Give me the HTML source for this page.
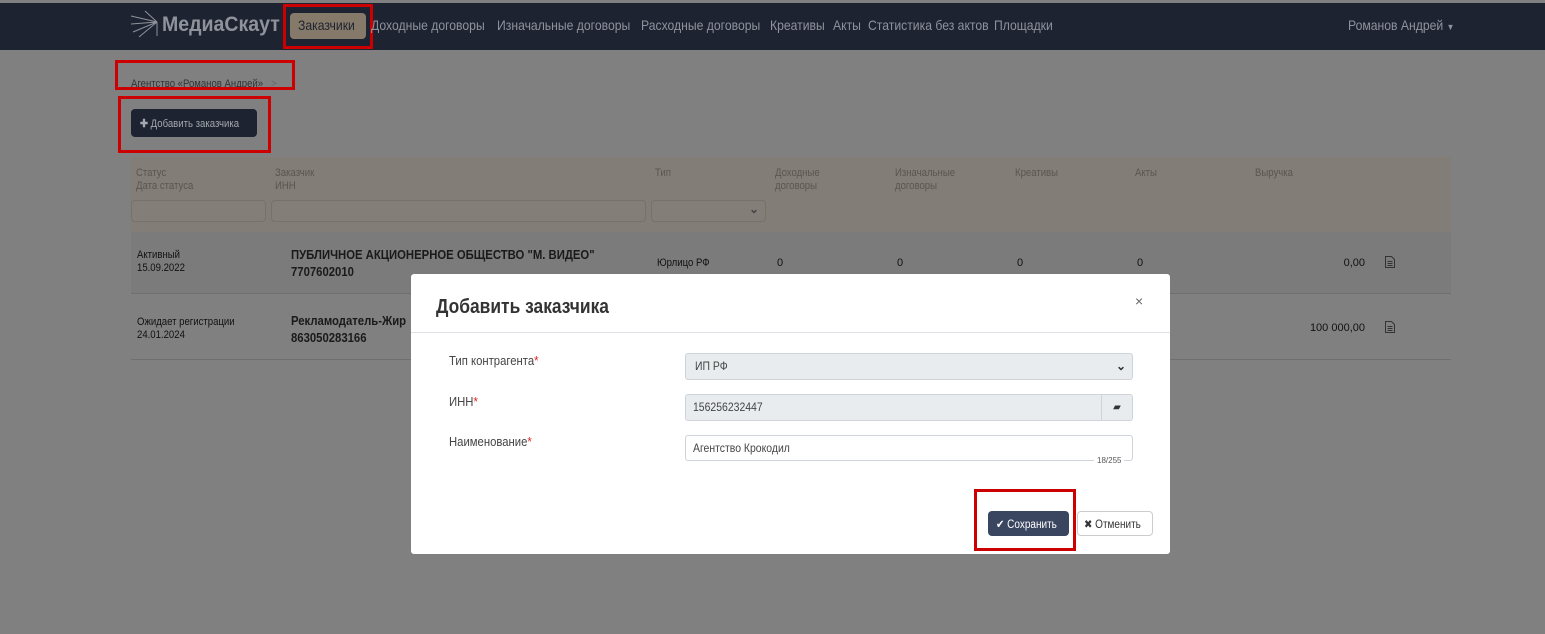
<!DOCTYPE html>
<html><head><meta charset="utf-8"><style>
*{box-sizing:border-box;margin:0;padding:0}
body{width:1545px;height:634px;background:#808080;font-family:"Liberation Sans",sans-serif;position:relative;overflow:hidden;color:#1a1a1a}
.a{position:absolute}
.n{transform:scaleX(.87);transform-origin:left top;white-space:nowrap}
.nav{left:0;top:3px;width:1545px;height:47px;background:#1e2332}
.navt{color:#8f929a;font-size:14px;top:17px}
.red{border:3px solid #c00;position:absolute}
.lbl{font-size:11px;color:#5a5550;line-height:13px}
.inp{background:#837e78;border:1px solid #77716b;border-radius:4px;height:22px}
.cell{font-size:11px;color:#111;line-height:13px}
.b{font-weight:bold;font-size:13px;line-height:17px}
.line{height:1px;background:#6f6f6f;left:131px;width:1320px}
.modal{left:411px;top:274px;width:759px;height:280px;background:#fff;border-radius:3px}
.ml{font-size:13px;color:#444}
.ml span{color:#e02020}
.fi{border:1px solid #ced4da;border-radius:3px;font-size:12px;color:#444;padding-left:9px;line-height:25px}
</style></head><body>
<div class="a nav"></div>
<svg class="a" style="left:129px;top:10px" width="32" height="28" viewBox="0 0 32 28"><g stroke="#8f929a" stroke-width="1" fill="none"><path d="M2 6 L28 12 M2 14 L28 12 M4 22 L28 12 M10 27 L28 12 M16 1 L28 12 M28 12 L28 26"/></g></svg>
<div class="a n" style="left:162px;top:13px;font-size:21px;font-weight:bold;color:#8f929a;transform:scaleX(.93)">МедиаСкаут</div>
<div class="a" style="left:290px;top:13px;width:76px;height:26px;background:#857a69;border-radius:4px"></div>
<div class="a navt n" style="left:298px;color:#1e2332">Заказчики</div>
<div class="red" style="left:283px;top:4px;width:90px;height:45px"></div>
<div class="a navt n" style="left:371px">Доходные договоры</div>
<div class="a navt n" style="left:497px">Изначальные договоры</div>
<div class="a navt n" style="left:641px">Расходные договоры</div>
<div class="a navt n" style="left:770px">Креативы</div>
<div class="a navt n" style="left:833px">Акты</div>
<div class="a navt n" style="left:868px">Статистика без актов</div>
<div class="a navt n" style="left:994px">Площадки</div>
<div class="a navt n" style="left:1348px">Романов Андрей <span style="font-size:9px">▼</span></div>

<div class="a n" style="left:131px;top:78px;font-size:11px;color:#333">Агентство «Романов Андрей» <span style="color:#666;margin-left:6px">&gt;</span></div>
<div class="red" style="left:115px;top:60px;width:180px;height:30px"></div>
<div class="a" style="left:131px;top:109px;width:126px;height:28px;background:#1e2332;border-radius:4px"></div>
<div class="a n" style="left:140px;top:117px;font-size:11px;color:#a5a8ae"><b>✚</b> Добавить заказчика</div>
<div class="red" style="left:118px;top:96px;width:153px;height:57px"></div>

<div class="a" style="left:131px;top:157px;width:1320px;height:75px;background:#837d77"></div>
<div class="a lbl n" style="left:136px;top:167px">Статус<br>Дата статуса</div>
<div class="a lbl n" style="left:275px;top:167px">Заказчик<br>ИНН</div>
<div class="a lbl n" style="left:655px;top:167px">Тип</div>
<div class="a lbl n" style="left:775px;top:167px">Доходные<br>договоры</div>
<div class="a lbl n" style="left:895px;top:167px">Изначальные<br>договоры</div>
<div class="a lbl n" style="left:1015px;top:167px">Креативы</div>
<div class="a lbl n" style="left:1135px;top:167px">Акты</div>
<div class="a lbl n" style="left:1255px;top:167px">Выручка</div>
<div class="a inp" style="left:131px;top:200px;width:135px"></div>
<div class="a inp" style="left:271px;top:200px;width:375px"></div>
<div class="a inp" style="left:651px;top:200px;width:115px"><span class="a" style="right:6px;top:1px;font-size:12px;color:#444;font-weight:bold">⌄</span></div>

<div class="a" style="left:131px;top:232px;width:1320px;height:61px;background:#7b7b7b"></div>
<div class="a line" style="top:293px"></div>
<div class="a line" style="top:359px"></div>
<div class="a cell n" style="left:137px;top:249px">Активный<br>15.09.2022</div>
<div class="a b n" style="left:291px;top:246px">ПУБЛИЧНОЕ АКЦИОНЕРНОЕ ОБЩЕСТВО "М. ВИДЕО"<br>7707602010</div>
<div class="a cell n" style="left:657px;top:257px">Юрлицо РФ</div>
<div class="a cell" style="left:777px;top:257px">0</div>
<div class="a cell" style="left:897px;top:257px">0</div>
<div class="a cell" style="left:1017px;top:257px">0</div>
<div class="a cell" style="left:1137px;top:257px">0</div>
<div class="a cell" style="left:1325px;top:257px;width:40px;text-align:right">0,00</div>
<svg class="a" style="left:1385px;top:256px" width="10" height="12" viewBox="0 0 10 12"><path d="M.5.5h6l3 3v8H.5z M2.5 5.5h5 M2.5 7.5h5 M2.5 9.5h5" fill="none" stroke="#333"/></svg>
<div class="a cell n" style="left:137px;top:316px">Ожидает регистрации<br>24.01.2024</div>
<div class="a b n" style="left:291px;top:312px">Рекламодатель-Жир<br>863050283166</div>
<div class="a cell" style="left:1285px;top:322px;width:80px;text-align:right">100 000,00</div>
<svg class="a" style="left:1385px;top:321px" width="10" height="12" viewBox="0 0 10 12"><path d="M.5.5h6l3 3v8H.5z M2.5 5.5h5 M2.5 7.5h5 M2.5 9.5h5" fill="none" stroke="#333"/></svg>

<div class="a modal">
 <div class="a n" style="left:25px;top:22px;font-size:20px;font-weight:bold;color:#333">Добавить заказчика</div>
 <div class="a" style="left:724px;top:19px;font-size:14px;color:#666">×</div>
 <div class="a" style="left:0;top:58px;width:759px;height:1px;background:#dee2e6"></div>
 <div class="a ml n" style="left:38px;top:79px">Тип контрагента<span>*</span></div>
 <div class="a ml n" style="left:38px;top:120px">ИНН<span>*</span></div>
 <div class="a ml n" style="left:38px;top:160px">Наименование<span>*</span></div>
 <div class="a fi" style="left:274px;top:79px;width:448px;height:27px;background:#e9ecef"><span class="n" style="display:inline-block">ИП РФ</span><span class="a" style="right:6px;top:0;font-size:12px;color:#333;font-weight:bold">⌄</span></div>
 <div class="a fi" style="left:274px;top:120px;width:448px;height:27px;background:#e9ecef;padding-left:7px"><span class="n" style="display:inline-block">156256232447</span><div class="a" style="right:0;top:0;width:31px;height:25px;border-left:1px solid #ced4da;text-align:center;font-size:10px;color:#333">▰</div></div>
 <div class="a fi" style="left:274px;top:161px;width:448px;height:26px;background:#fff;padding-left:7px"><span class="n" style="display:inline-block">Агентство Крокодил</span></div>
 <div class="a" style="left:683px;top:182px;font-size:8px;color:#555;background:#fff;padding:0 3px">18/255</div>
 <div class="a" style="left:577px;top:237px;width:81px;height:25px;background:#3a4560;border-radius:4px"></div>
 <div class="a n" style="left:585px;top:243px;color:#fff;font-size:11.5px">✔ Сохранить</div>
 <div class="a" style="left:666px;top:237px;width:76px;height:25px;border:1px solid #ccc;border-radius:4px"></div>
 <div class="a n" style="left:673px;top:243px;color:#333;font-size:11.5px">✖ Отменить</div>
</div>
<div class="red" style="left:974px;top:489px;width:102px;height:62px"></div>
</body></html>
